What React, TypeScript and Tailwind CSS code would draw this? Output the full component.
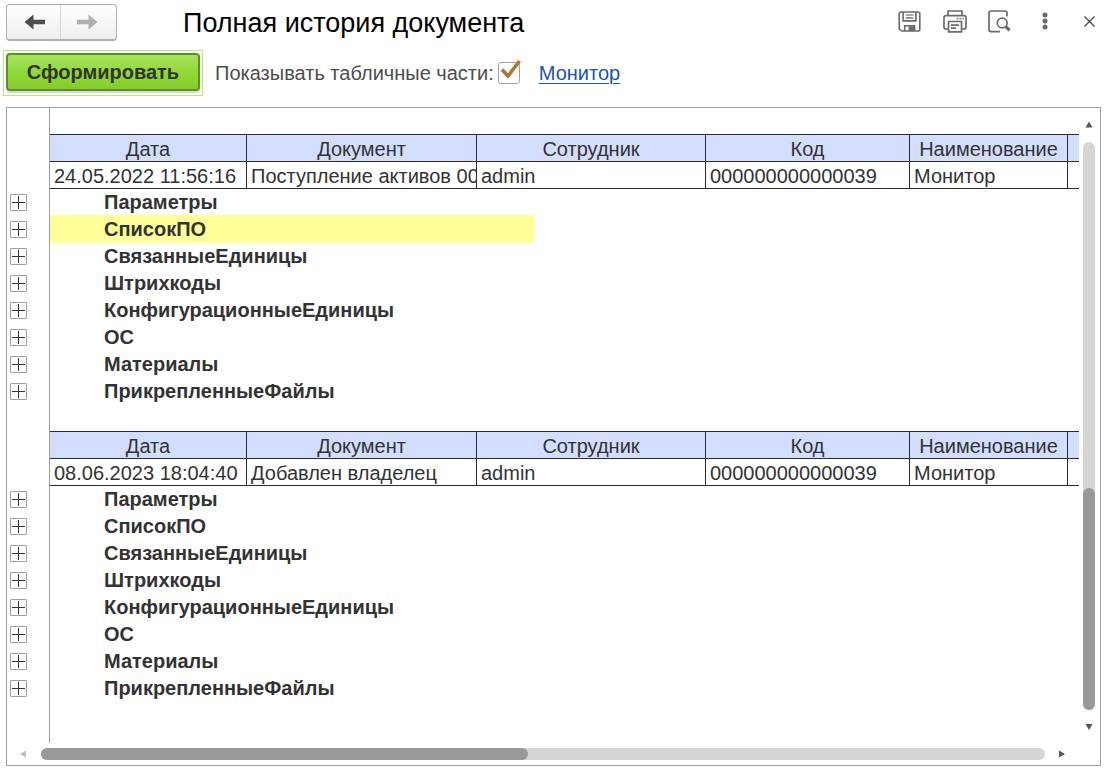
import React, { useState } from "react";

const columns = [
  { title: "Дата", width: "w-[197px]" },
  { title: "Документ", width: "w-[230px]" },
  { title: "Сотрудник", width: "w-[229px]" },
  { title: "Код", width: "w-[204px]" },
  { title: "Наименование", width: "w-[158px]" },
];

const sections = [
  "Параметры",
  "СписокПО",
  "СвязанныеЕдиницы",
  "Штрихкоды",
  "КонфигурационныеЕдиницы",
  "ОС",
  "Материалы",
  "ПрикрепленныеФайлы",
];

const records = [
  {
    cells: ["24.05.2022 11:56:16", "Поступление активов 000", "admin", "000000000000039", "Монитор"],
    selected: "СписокПО",
  },
  {
    cells: ["08.06.2023 18:04:40", "Добавлен владелец", "admin", "000000000000039", "Монитор"],
    selected: "",
  },
];

function Arrow({ className }: { className: string }) {
  return (
    <svg className={className} width="22" height="16" viewBox="0 0 22 16" fill="currentColor" aria-hidden="true">
      <path d="M0.5 8 L9.5 0.5 V5.8 H21 V10.2 H9.5 V15.5 Z" />
    </svg>
  );
}

function SaveIcon() {
  return (
    <svg width="23" height="21" viewBox="0 0 24 22" fill="none" stroke="#6b6b6b" strokeWidth="1.7" aria-hidden="true">
      <path d="M3.2 1 H20.8 Q22.8 1 22.8 3 V19 Q22.8 21 20.8 21 H3.8 L1.2 18.8 V3 Q1.2 1 3.2 1 Z" />
      <path d="M5.3 1 V10.4 H18.7 V1" />
      <path d="M8 4.2 H16 M8 7.2 H16" stroke="#8b8b8b" />
      <path d="M7 21 V15.5 H17.3 V21" />
      <path d="M11 16 H17 V21 H11 Z" fill="#6b6b6b" stroke="none" />
    </svg>
  );
}

function PrintIcon() {
  return (
    <svg width="24" height="23" viewBox="0 0 24 23" fill="none" stroke="#6b6b6b" strokeWidth="1.7" aria-hidden="true">
      <path d="M5 5.5 V1 H19 V5.5" />
      <path d="M5 19 H3 Q1 19 1 17 V7.6 Q1 5.6 3 5.6 H21 Q23 5.6 23 7.6 V17 Q23 19 21 19 H19" />
      <path d="M5.5 11.5 H18.5 V21.8 H5.5 Z" />
      <path d="M8 15.2 H16 M8 18.2 H13" />
      <path d="M13.5 8.7 H15.5 M16.5 8.7 H18.5 M19.5 8.7 H21" stroke="#8b8b8b" />
    </svg>
  );
}

function PreviewIcon() {
  return (
    <svg width="24" height="23" viewBox="0 0 24 23" fill="none" stroke="#6b6b6b" strokeWidth="1.7" aria-hidden="true">
      <path d="M12 21.6 H3 Q1 21.6 1 19.6 V3 Q1 1 3 1 H17 Q19 1 19 3 V6.5" />
      <circle cx="14.2" cy="13" r="4.9" />
      <path d="M17.6 16.4 L21.5 20.4" strokeWidth="3.2" />
    </svg>
  );
}

function Triangle({ points, className }: { points: string; className: string }) {
  return (
    <svg className={className} width="8" height="8" viewBox="0 0 8 8" fill="currentColor" aria-hidden="true">
      <polygon points={points} />
    </svg>
  );
}

function RecordTable({ cells }: { cells: string[] }) {
  return (
    <table className="w-full table-fixed border-separate border-spacing-0 leading-6">
      <thead>
        <tr className="bg-[#d3deff]">
          {columns.map((c) => (
            <th key={c.title} className={`${c.width} h-7 border-y border-r border-[#2b2b2b] px-0 pt-0.5 pb-0 text-center font-normal`}>
              {c.title}
            </th>
          ))}
          <td className="border-y border-[#2b2b2b] p-0" />
        </tr>
      </thead>
      <tbody>
        <tr>
          {cells.map((text, i) => (
            <td key={i} className="h-[27px] overflow-hidden border-r border-b border-[#2b2b2b] pt-0.5 pr-0 pb-0 pl-1 whitespace-nowrap">
              {text}
            </td>
          ))}
          <td className="border-b border-[#2b2b2b] p-0" />
        </tr>
      </tbody>
    </table>
  );
}

export default function App() {
  const [showParts, setShowParts] = useState(true);

  return (
    <div className="flex min-h-screen flex-col bg-white pt-1 pr-[13px] pb-2 pl-[6px] font-['Liberation_Sans',Arial,sans-serif] text-[20px] text-[#333333]">
      <header className="flex h-[37px] items-center">
        <nav className="flex h-[37px] w-[111px] shrink-0 rounded-[4px] border border-b-2 border-[#b0b0b0] bg-linear-to-b from-white to-[#eeeeee]">
          <button aria-label="Назад" className="flex flex-1 items-center justify-center border-r border-[#d4d4d4] pl-0.5">
            <Arrow className="text-[#4d4d4d]" />
          </button>
          <button aria-label="Вперед" className="flex flex-1 items-center justify-center pr-1">
            <Arrow className="-scale-x-100 text-[#b0b0b0]" />
          </button>
        </nav>
        <h1 className="ml-[66px] flex-1 text-[27px] leading-9 whitespace-nowrap text-black">Полная история документа</h1>
        <div className="flex items-center pb-[3px]">
          <button aria-label="Сохранить" className="mr-[22px]"><SaveIcon /></button>
          <button aria-label="Печать" className="mr-[21px]"><PrintIcon /></button>
          <button aria-label="Предварительный просмотр" className="mr-[30px]"><PreviewIcon /></button>
          <button aria-label="Еще" className="mr-9">
            <svg width="6" height="18" viewBox="0 0 6 18" fill="#6b6b6b" aria-hidden="true">
              <circle cx="3" cy="3" r="2.5" />
              <circle cx="3" cy="9" r="2.5" />
              <circle cx="3" cy="15" r="2.5" />
            </svg>
          </button>
          <button aria-label="Закрыть" className="mr-[6px]">
            <svg width="11" height="11" viewBox="0 0 11 11" stroke="#4d4d4d" strokeWidth="1.4" aria-hidden="true">
              <path d="M0.5 0.5 L10.5 10.5 M10.5 0.5 L0.5 10.5" />
            </svg>
          </button>
        </div>
      </header>

      <div className="mt-[9px] -ml-[3px] flex h-[46px] items-center">
        <div className="h-[46px] w-[200px] shrink-0 border border-[#b5ea7c] p-[2px]">
          <button className="h-[38px] w-full rounded-[4px] border-2 border-[#5d9222] bg-linear-to-b from-[#aae362] via-[#90da35] to-[#84cd2d] font-bold shadow-[0_2px_0_#d8d8d8]">
            Сформировать
          </button>
        </div>
        <label htmlFor="show-parts" className="ml-3 whitespace-nowrap text-[#4d4d4d]">Показывать табличные части:</label>
        <span className="relative ml-1 flex">
          <input
            id="show-parts"
            type="checkbox"
            checked={showParts}
            onChange={(e) => setShowParts(e.target.checked)}
            className="size-[22px] appearance-none rounded-[3px] border border-[#a0a0a0] bg-white"
          />
          {showParts && (
            <svg className="pointer-events-none absolute -top-[3px] left-0" width="24" height="24" viewBox="0 0 24 24" fill="none" stroke="#b0743a" strokeWidth="3.6" aria-hidden="true">
              <path d="M4 10.5 L10 17 L21.5 2" />
            </svg>
          )}
        </span>
        <a href="#monitor" className="ml-[19px] text-[#1a55b0] underline decoration-1 underline-offset-[3px]">Монитор</a>
      </div>

      <main className="mt-[11px] flex flex-1 flex-col border border-[#a0a0a0]">
        <div className="flex flex-1">
          <div className="w-[43px] shrink-0 border-r border-[#a0a0a0]">
            {records.map((r) => (
              <div key={r.cells[0]} className="pt-[81px]">
                {sections.map((name) => (
                  <div key={name} className="flex h-[27px] items-center pl-[3px]">
                    <button aria-label={`Развернуть ${name}`} className="flex size-[17px] items-center justify-center rounded-[1px] border border-[#a0a0a0]">
                      <svg width="13" height="13" viewBox="0 0 13 13" stroke="#333333" shapeRendering="crispEdges" aria-hidden="true">
                        <path d="M0 6.5 H13 M6.5 0 V13" />
                      </svg>
                    </button>
                  </div>
                ))}
              </div>
            ))}
          </div>

          <div className="min-w-0 flex-1 overflow-hidden">
            {records.map((r) => (
              <section key={r.cells[0]} className="pt-[26px]">
                <RecordTable cells={r.cells} />
                <ul className="font-bold">
                  {sections.map((name) => (
                    <li
                      key={name}
                      className={
                        name === r.selected
                          ? "h-[27px] w-[484px] bg-[#ffff99] pl-[54px] leading-[26px] shadow-[0_-1px_0_#ffff99]"
                          : "h-[27px] pl-[54px] leading-[26px]"
                      }
                    >
                      {name}
                    </li>
                  ))}
                </ul>
              </section>
            ))}
          </div>

          <div className="flex w-[21px] shrink-0 flex-col items-center pr-px">
            <button aria-label="Вверх" className="flex h-[34px] items-center">
              <Triangle points="4,0.5 7.5,6.5 0.5,6.5" className="text-[#555555]" />
            </button>
            <div className="flex w-3 flex-1 flex-col justify-end rounded-full bg-[#d5d5d5]">
              <div className="h-[39%] rounded-full bg-[#999999]" />
            </div>
            <button aria-label="Вниз" className="flex h-[33px] items-center">
              <Triangle points="0.5,1 7.5,1 4,7" className="text-[#555555]" />
            </button>
          </div>
        </div>

        <div className="flex h-[22px] items-center pr-[21px]">
          <button aria-label="Влево" className="flex w-[34px] justify-center">
            <Triangle points="6,0.5 6,7.5 0,4" className="text-[#c0c0c0]" />
          </button>
          <div className="h-3 flex-1 rounded-full bg-[#d5d5d5]">
            <div className="h-3 w-[48.5%] rounded-full bg-[#999999]" />
          </div>
          <button aria-label="Вправо" className="flex w-[34px] justify-center">
            <Triangle points="1,0.5 1,7.5 7,4" className="text-[#555555]" />
          </button>
        </div>
      </main>
    </div>
  );
}
